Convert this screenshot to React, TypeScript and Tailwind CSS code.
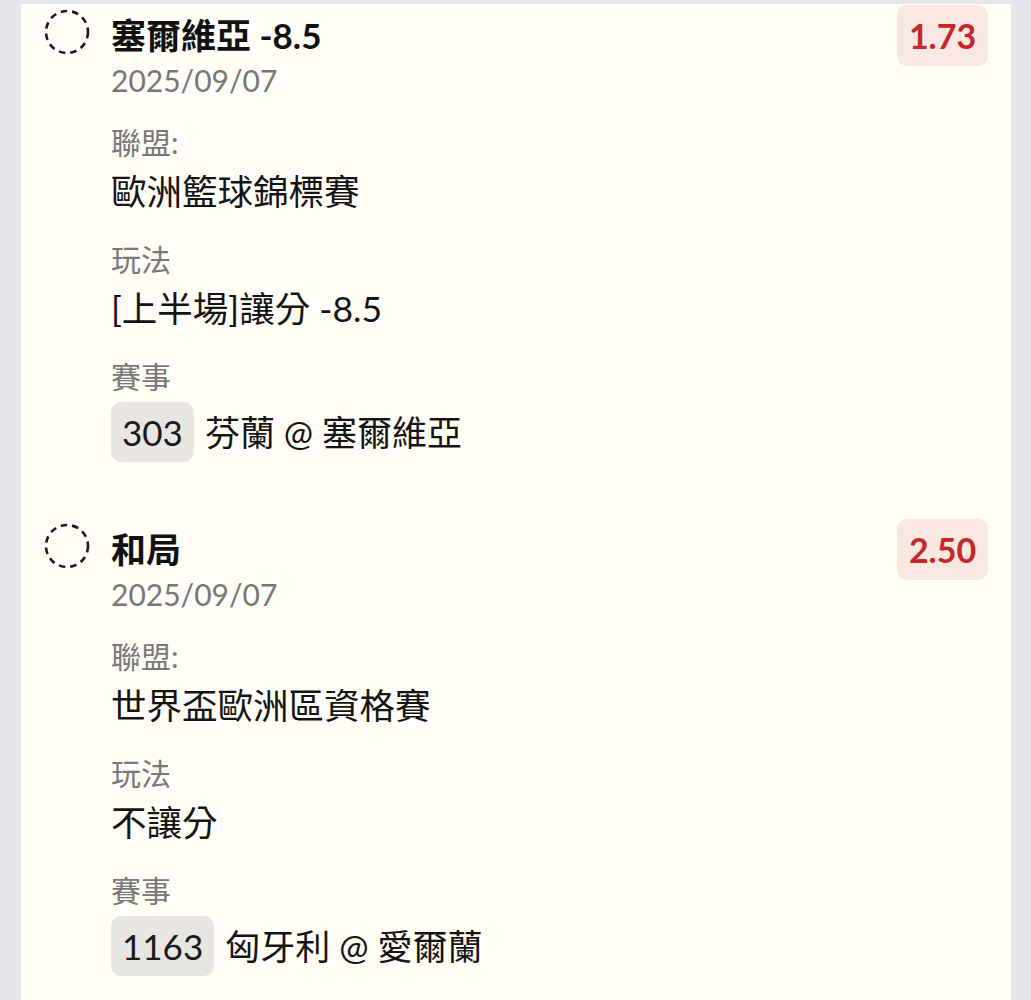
import React from 'react'

interface Pick {
  id: string
  title: string
  date: string
  league: string
  market: string
  code: string
  matchup: string
  odds: string
}

const PICKS: Pick[] = [
  { id: 'a', title: '塞爾維亞 -8.5', date: '2025/09/07', league: '歐洲籃球錦標賽', market: '[上半場]讓分 -8.5', code: '303', matchup: '芬蘭 @ 塞爾維亞', odds: '1.73' },
  { id: 'b', title: '和局', date: '2025/09/07', league: '世界盃歐洲區資格賽', market: '不讓分', code: '1163', matchup: '匈牙利 @ 愛爾蘭', odds: '2.50' },
]

const FONT = { fontFamily: 'Lato, "Noto Sans CJK TC", "Noto Sans", sans-serif' }

function DashedCircle() {
  return (
    <svg width="46" height="46" viewBox="0 0 46 46" className="shrink-0">
      <circle cx="23" cy="23" r="21" fill="none" stroke="#1a1a1a" strokeWidth="2.6" strokeDasharray="6.5 5" strokeLinecap="butt" />
    </svg>
  )
}

function Field({ label, first, children }: { label: string; first?: boolean; children: React.ReactNode }) {
  return (
    <div className={first ? 'mt-[18px]' : 'mt-[21px]'}>
      <div className="text-[30px] leading-[42px] text-[#787878]">{label}</div>
      <div className="mt-[4px]">{children}</div>
    </div>
  )
}

export default function App() {
  return (
    <div className="min-h-screen bg-[#e5e6ea] pt-[4px] pl-[21px] pr-[20px]" style={FONT}>
      <div className="bg-[#fffdf6] min-h-[1100px] pt-[1px] pl-[23px] pr-[23px]">
        {PICKS.map((p, i) => (
          <div key={p.id} className={`flex items-start ${i > 0 ? 'mt-[57px]' : ''}`}>
            <div className="mt-[4px] w-[67px] shrink-0">
              <DashedCircle />
            </div>
            <div className="flex-1 min-w-0">
              <div className="mt-[8px] text-[35px] leading-[44px] font-bold text-[#111]">{p.title}</div>
              <div className="text-[30px] leading-[46px] text-[#777]">{p.date}</div>
              <Field label="聯盟:" first>
                <div className="text-[35.5px] leading-[50px] text-[#141414]">{p.league}</div>
              </Field>
              <Field label="玩法">
                <div className="text-[35.5px] leading-[50px] text-[#141414]">{p.market}</div>
              </Field>
              <div className="mt-[21px]">
                <div className="text-[30px] leading-[42px] text-[#787878]">賽事</div>
                <div className="mt-[5px] flex items-center gap-[11px]">
                  <span className="h-[60px] px-[11px] flex items-center rounded-[10px] bg-[#e8e6e0] text-[35px] text-[#1a1a1a]">{p.code}</span>
                  <span className="text-[35px] leading-[50px] text-[#141414]">{p.matchup}</span>
                </div>
              </div>
            </div>
            <div className="w-[91px] h-[61px] rounded-[10px] bg-[#f9e7e1] flex items-center justify-center text-[34px] font-bold text-[#c4282b] shrink-0">
              {p.odds}
            </div>
          </div>
        ))}
      </div>
    </div>
  )
}
